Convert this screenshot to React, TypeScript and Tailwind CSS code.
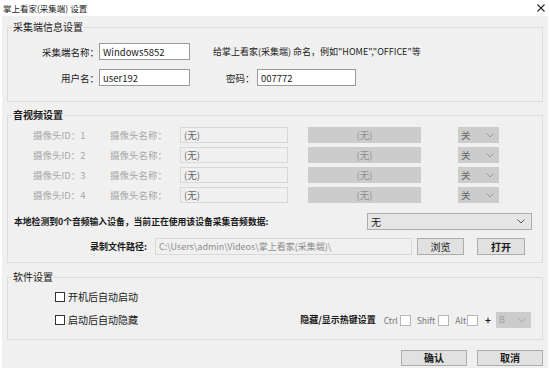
import React from "react";

const Chevron = ({ color = "#555" }: { color?: string }) => (
    <svg width="8" height="5" viewBox="0 0 8 5" fill="none">
        <path d="M0.5 0.5 L4 4 L7.5 0.5" stroke={color} strokeWidth="1" />
    </svg>
);

const Box = ({ dark = true }: { dark?: boolean }) =>
    dark ? (
        <span className="inline-block w-[10px] h-[10px] bg-white border border-[#333]" />
    ) : (
        <span className="inline-block w-[11px] h-[11px] bg-white border border-[#b5b5b5]" />
    );

const App = () => {
    const cameras = [1, 2, 3, 4];

    return (
        <div
            className="w-[550px] h-[370px] bg-white text-[10px] leading-[14px] text-[#1a1a1a] overflow-hidden"
            style={{ fontFamily: '"Noto Sans CJK SC", "Noto Sans", sans-serif' }}
        >
            {/* Title bar */}
            <div className="h-[16px] flex items-center justify-between pl-[3px] pr-[5px] bg-white">
                <span className="text-[8.5px]">掌上看家(采集端) 设置</span>
                <svg width="8" height="8" viewBox="0 0 8 8">
                    <path d="M0.5 0.5 L7.5 7.5 M7.5 0.5 L0.5 7.5" stroke="#222" strokeWidth="1.1" />
                </svg>
            </div>

            {/* Body */}
            <div className="h-[352px] bg-[#f0f0f0] mx-[2px] pt-[4px] px-[5px] flex flex-col">
                {/* 采集端信息设置 */}
                <fieldset className="border border-[#dcdcdc] pb-[15px]">
                    <legend className="ml-[4px] px-[1px]">采集端信息设置</legend>
                    <div className="mt-[9px] flex items-center h-[17px]">
                        <span className="w-[91px] text-right text-[9.5px]">采集端名称：</span>
                        <div className="w-[91px] h-[17px] bg-white border border-[#9a9a9a] px-[3px] flex items-center text-[9.5px]">
                            Windows5852
                        </div>
                        <span className="ml-[23px] text-[9px]">给掌上看家(采集端) 命名，例如"HOME","OFFICE"等</span>
                    </div>
                    <div className="mt-[9px] flex items-center h-[17px]">
                        <span className="w-[91px] text-right text-[9.5px]">用户名：</span>
                        <div className="w-[91px] h-[17px] bg-white border border-[#9a9a9a] px-[3px] flex items-center text-[9.5px]">
                            user192
                        </div>
                        <span className="ml-[36px] w-[31px] text-[9.5px]">密码：</span>
                        <div className="w-[99px] h-[17px] bg-white border border-[#9a9a9a] px-[3px] flex items-center text-[9.5px]">
                            007772
                        </div>
                    </div>
                </fieldset>

                {/* 音视频设置 */}
                <fieldset className="mt-[6px] border border-[#dcdcdc] pb-[7px]">
                    <legend className="ml-[4px] px-[1px] font-bold">音视频设置</legend>
                    <div className="mt-[5px] flex flex-col gap-[4px]">
                        {cameras.map((id) => (
                            <div key={id} className="flex items-center h-[16px] text-[#a8a8a8] text-[9.5px]">
                                <span className="ml-[25px] w-[77px]">摄像头ID：{id}</span>
                                <span className="w-[70px]">摄像头名称：</span>
                                <div className="w-[108px] h-[16px] border border-[#d8d8d8] px-[3px] flex items-center text-[#666]">
                                    (无)
                                </div>
                                <div className="ml-[20px] w-[113px] h-[16px] bg-[#cccccc] flex items-center justify-center text-[#8c8c8c]">
                                    (无)
                                </div>
                                <div className="ml-[37px] w-[41px] h-[16px] bg-[#cccccc] flex items-center justify-between pl-[3px] pr-[5px] text-[#666]">
                                    <span>关</span>
                                    <Chevron color="#999" />
                                </div>
                            </div>
                        ))}
                    </div>
                    <div className="mt-[10px] flex items-center h-[17px]">
                        <span className="ml-[6px] font-bold text-[8.8px]">本地检测到0个音频输入设备，当前正在使用该设备采集音频数据:</span>
                        <div className="ml-auto mr-[10px] w-[165px] h-[17px] bg-[#e5e5e5] border border-[#adadad] flex items-center justify-between pl-[3px] pr-[6px]">
                            <span>无</span>
                            <Chevron />
                        </div>
                    </div>
                    <div className="mt-[8px] flex items-center h-[17px]">
                        <span className="w-[147px] text-right pr-[8px] font-bold text-[9px]">录制文件路径:</span>
                        <div className="w-[257px] h-[17px] border border-[#d8d8d8] px-[3px] flex items-center text-[#8c8c8c] text-[9px]">
                            C:\Users\admin\Videos\掌上看家(采集端)\
                        </div>
                        <div className="ml-[5px] w-[47px] h-[17px] bg-[#e1e1e1] border border-[#adadad] flex items-center justify-center">
                            浏览
                        </div>
                        <div className="ml-[13px] w-[48px] h-[17px] bg-[#e1e1e1] border border-[#adadad] flex items-center justify-center font-bold">
                            打开
                        </div>
                    </div>
                </fieldset>

                {/* 软件设置 */}
                <fieldset className="mt-[7px] border border-[#dcdcdc] pb-[11px]">
                    <legend className="ml-[4px] px-[1px]">软件设置</legend>
                    <div className="mt-[8px] h-[10px] flex items-center ml-[47px] gap-[3px]">
                        <Box />
                        <span>开机后自动启动</span>
                    </div>
                    <div className="mt-[10px] h-[16px] flex items-center">
                        <div className="ml-[47px] flex items-center gap-[3px]">
                            <Box />
                            <span>启动后自动隐藏</span>
                        </div>
                        <span className="ml-auto font-bold text-[9px]">隐藏/显示热键设置</span>
                        <span className="ml-[8px] text-[8.5px] text-[#777]">Ctrl</span>
                        <span className="ml-[2px] flex"><Box dark={false} /></span>
                        <span className="ml-[6px] text-[8.5px] text-[#777]">Shift</span>
                        <span className="ml-[3px] flex"><Box dark={false} /></span>
                        <span className="ml-[6px] text-[8.5px] text-[#777]">Alt</span>
                        <span className="ml-[1px] flex"><Box dark={false} /></span>
                        <span className="ml-[7px] font-bold">+</span>
                        <div className="ml-[5px] mr-[11px] w-[35px] h-[16px] bg-[#cccccc] flex items-center justify-between pl-[3px] pr-[5px] text-[#a0a0a0] text-[9px]">
                            <span>B</span>
                            <Chevron color="#aaa" />
                        </div>
                    </div>
                </fieldset>

                {/* Buttons */}
                <div className="mt-[10px] flex justify-end gap-[10px]">
                    <div className="w-[66px] h-[16px] bg-[#e1e1e1] border border-[#adadad] flex items-center justify-center font-bold">
                        确认
                    </div>
                    <div className="w-[66px] h-[16px] bg-[#e1e1e1] border border-[#adadad] flex items-center justify-center font-bold">
                        取消
                    </div>
                </div>
            </div>
        </div>
    );
};

export default App;
